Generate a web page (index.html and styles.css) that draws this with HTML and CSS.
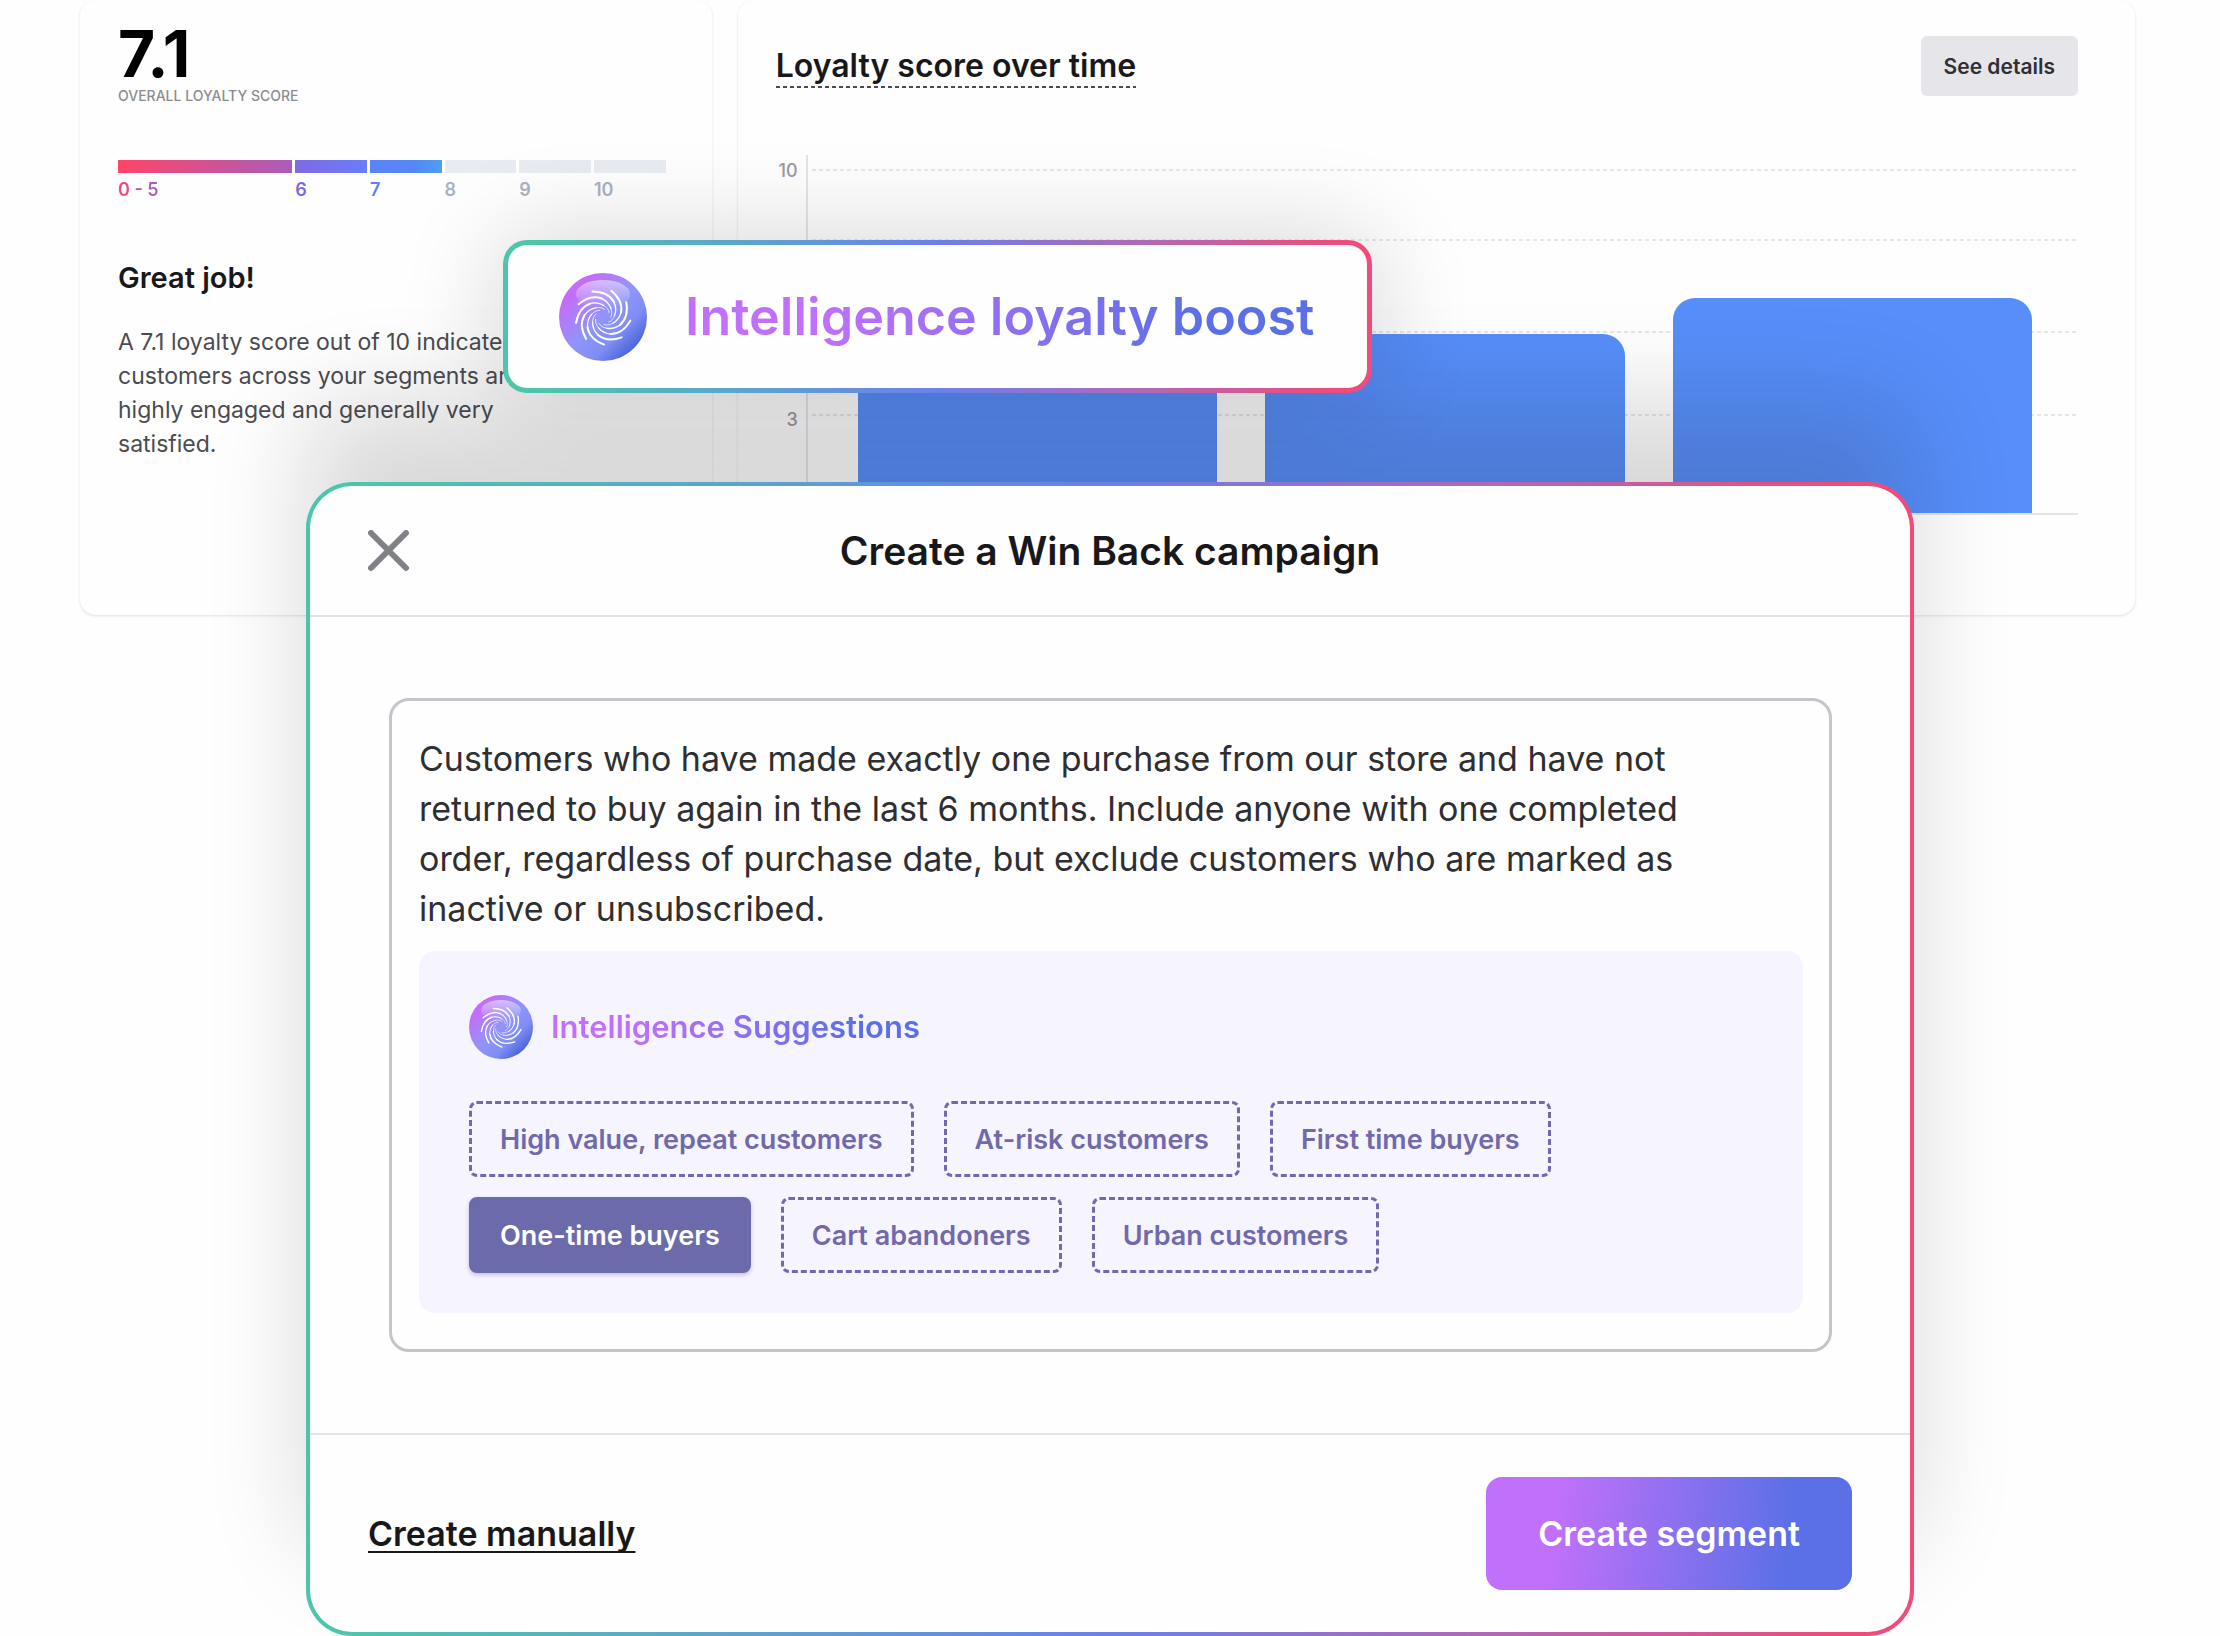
FILE: index.html
```html
<!DOCTYPE html>
<html lang="en">
<head>
<meta charset="utf-8">
<title>Create a Win Back campaign</title>
<link rel="stylesheet" href="styles.css">
</head>
<body>
<svg width="0" height="0" class="defs" aria-hidden="true">
  <defs>
    <linearGradient id="orb-fill" x1="0.1" y1="0.15" x2="0.85" y2="0.9">
      <stop offset="0.08" stop-color="#c56cf8"/>
      <stop offset="0.5" stop-color="#9095fa"/>
      <stop offset="0.75" stop-color="#7f8df5"/>
      <stop offset="1" stop-color="#4560d6"/>
    </linearGradient>
    <linearGradient id="orb-gloss" x1="0" y1="0" x2="0" y2="1">
      <stop offset="0" stop-color="#fff" stop-opacity="0.5"/>
      <stop offset="1" stop-color="#fff" stop-opacity="0"/>
    </linearGradient>
    <g id="arm" fill="none" stroke="#fff">
      <path d="M38 21 C50 21 58 25 62.500 33" stroke-width="2.2" stroke-linecap="round"/>
      <path d="M62 32 C65 38 65 44 63 49" stroke-width="1.5"/>
      <path d="M63 48.500 C62 52 59 55 56 56" stroke-width="0.8"/>
    </g>
    <symbol id="orb" viewBox="0 0 100 100">
      <circle cx="50" cy="50" r="50" fill="url(#orb-fill)"/>
      <ellipse cx="50" cy="24" rx="31" ry="16" fill="url(#orb-gloss)"/>
      <use href="#arm"/>
      <use href="#arm" transform="rotate(40 50 50)"/>
      <use href="#arm" transform="rotate(80 50 50)"/>
      <use href="#arm" transform="rotate(120 50 50)"/>
      <use href="#arm" transform="rotate(160 50 50)"/>
      <use href="#arm" transform="rotate(200 50 50)"/>
      <use href="#arm" transform="rotate(240 50 50)"/>
      <use href="#arm" transform="rotate(280 50 50)"/>
      <use href="#arm" transform="rotate(320 50 50)"/>
    </symbol>
  </defs>
</svg>
<main class="stage">
  <div class="dashboard">
    <section class="card score">
      <p class="score-value">7.1</p>
      <p class="score-label">OVERALL LOYALTY SCORE</p>
      <ol class="meter">
        <li class="step step-low"><span>0 - 5</span></li>
        <li class="step step-six"><span>6</span></li>
        <li class="step step-seven"><span>7</span></li>
        <li class="step"><span>8</span></li>
        <li class="step"><span>9</span></li>
        <li class="step"><span>10</span></li>
      </ol>
      <h2 class="score-title">Great job!</h2>
      <p class="score-text">A 7.1 loyalty score out of 10 indicates customers across your segments are highly engaged and generally very satisfied.</p>
    </section>
    <section class="card trend">
      <header class="trend-head">
        <h2 class="trend-title">Loyalty score over time</h2>
        <button class="details" type="button">See details</button>
      </header>
      <div class="chart">
        <div class="axis"><span class="tick">10</span><span class="tick">3</span></div>
        <div class="plot">
          <div class="gridlines"><i></i><i></i><i></i><i></i></div>
          <div class="bars">
            <div class="bar" style="height: 43%"></div>
            <div class="bar" style="height: 50%"></div>
            <div class="bar" style="height: 60%"></div>
          </div>
        </div>
      </div>
    </section>
  </div>

  <div class="boost">
    <svg class="boost-orb" aria-hidden="true"><use href="#orb"/></svg>
    <span class="gradient-text boost-text">Intelligence loyalty boost</span>
  </div>

  <section class="dialog" role="dialog" aria-labelledby="dialog-title">
    <header class="dialog-head">
      <button class="close" type="button" aria-label="Close">
        <svg viewBox="0 0 42 42" width="42" height="42" aria-hidden="true"><path d="M3 3 L38 38 M38 3 L3 38" fill="none" stroke="#808187" stroke-width="6" stroke-linecap="round"/></svg>
      </button>
      <h1 class="dialog-title" id="dialog-title">Create a Win Back campaign</h1>
    </header>
    <div class="dialog-body">
      <div class="prompt">
        <p class="prompt-text">Customers who have made exactly one purchase from our store and have not returned to buy again in the last 6 months. Include anyone with one completed order, regardless of purchase date, but exclude customers who are marked as inactive or unsubscribed.</p>
        <div class="suggestions">
          <h2 class="suggestions-head">
            <svg class="suggestions-orb" aria-hidden="true"><use href="#orb"/></svg>
            <span class="gradient-text">Intelligence Suggestions</span>
          </h2>
          <div class="chips">
            <button class="chip" type="button">High value, repeat customers</button>
            <button class="chip" type="button">At-risk customers</button>
            <button class="chip" type="button">First time buyers</button>
          </div>
          <div class="chips">
            <button class="chip chip-on" type="button" aria-pressed="true">One-time buyers</button>
            <button class="chip" type="button">Cart abandoners</button>
            <button class="chip" type="button">Urban customers</button>
          </div>
        </div>
      </div>
    </div>
    <footer class="dialog-foot">
      <a class="manual" href="#manual">Create manually</a>
      <button class="create" type="button">Create segment</button>
    </footer>
  </section>
</main>
</body>
</html>
```
FILE: styles.css
```css
* { box-sizing: border-box; }
body { margin: 0; background: #fefefe; color: #18181b; font-family: Inter, "Liberation Sans", sans-serif; }
h1, h2, p, ol { margin: 0; padding: 0; }
button { font: inherit; border: 0; cursor: pointer; }
.defs { position: absolute; }

/* The dashboard and the dialog share one grid cell, so the dialog covers it */
.stage { position: relative; display: grid; grid-template-columns: minmax(0, 1fr); overflow: hidden; }
.dashboard, .dialog { grid-area: 1 / 1; }
.dashboard { display: grid; grid-template-columns: 632fr 1398fr; gap: 26px; align-self: start; padding: 0 85px 0 80px; }
.card { min-height: 615px; background: #fefefe; border-radius: 16px; box-shadow: 0 1px 3px rgba(0, 0, 0, .13); }

.score { padding: 22px 46px 40px 38px; }
.score-value { font-size: 64px; line-height: 64px; font-weight: 700; color: #000; }
.score-label { font-size: 14px; line-height: 20px; font-weight: 500; color: #8c8c8f; }
.meter { display: grid; grid-template-columns: 175fr 72fr 72fr 72fr 72fr 72fr; gap: 3px; list-style: none; margin-top: 54px; font-size: 18px; line-height: 22px; font-weight: 600; color: #a9b2c3; }
.step::before { content: ""; display: block; height: 13px; margin-bottom: 6px; background: #e9ebf2; }
.step-low::before { background: linear-gradient(90deg, #ff4568, #ab5cba); }
.step-low span { color: transparent; background: linear-gradient(90deg, #fa4670, #a45fc8); background-clip: text; }
.step-six { color: #7a6be4; }
.step-six::before { background: linear-gradient(90deg, #7f6ae2, #6a7dfa); }
.step-seven { color: #5a84f8; }
.step-seven::before { background: linear-gradient(90deg, #5a84f8, #5586f7 60%, #4f9ff0); }
.score-title { margin-top: 57px; font-size: 29px; line-height: 40px; font-weight: 600; }
.score-text { margin-top: 27px; max-width: 430px; font-size: 23px; line-height: 34px; color: #4b4b50; }

.trend { padding: 36px 57px 100px 38px; }
.trend-head { display: flex; justify-content: space-between; align-items: center; }
.trend-title { padding: 2px 0; font-size: 32px; line-height: 40px; font-weight: 600; background: repeating-linear-gradient(90deg, #4b4b50 0 4px, transparent 4px 7px) bottom / 100% 2px no-repeat; }
.details { height: 60px; padding: 0 23px; border-radius: 6px; background: #e5e5ea; color: #2f2f35; font-size: 21px; font-weight: 600; }
.chart { display: grid; grid-template-columns: 32px 1fr; height: 360px; margin-top: 59px; }
.axis { display: flex; flex-direction: column; align-items: flex-end; justify-content: space-between; padding: 5px 8px 84px 0; border-right: 2px solid #e4e4e8; font-size: 18px; line-height: 22px; font-weight: 500; color: #9a9a9f; }
.plot { display: grid; padding-left: 4px; border-bottom: 2px solid #e4e4e8; }
.gridlines, .bars { grid-area: 1 / 1; }
.gridlines { display: grid; grid-template-rows: 70px 92px 83px 98px; padding-top: 14px; }
.gridlines i { background: repeating-linear-gradient(90deg, #e6e6ea 0 4px, transparent 4px 7px) top / 100% 2px no-repeat; }
.bars { display: flex; align-items: flex-end; gap: 48px; padding: 0 46px; }
.bar { flex: 1; border-radius: 22px 22px 0 0; background: #578ef9; }

.boost, .dialog { border: 4px solid transparent; background: linear-gradient(#fefefe, #fefefe) padding-box, linear-gradient(90deg, #4cc5ab 4%, #5ea0d2 30%, #6b80ea 50%, #b566b4 75%, #f04b7a 96%) border-box; }
.boost { position: absolute; z-index: 2; top: 240px; left: 503px; display: flex; align-items: center; gap: 38px; height: 153px; padding: 0 53px 0 51px; border-width: 5px; border-radius: 24px; box-shadow: 0 0 100px rgba(20, 15, 22, .18); white-space: nowrap; }
.boost-orb { width: 88px; height: 88px; }
.boost-text { font-size: 52px; line-height: 72px; }
.gradient-text { font-weight: 600; color: transparent; background: linear-gradient(90deg, #c070fa 22%, #5b70e6 82%); background-clip: text; }

.dialog { z-index: 1; width: 73%; max-width: 1608px; margin: 482px auto 0; border-radius: 46px; box-shadow: 0 -82px 100px rgba(20, 15, 22, .15); }
.dialog-head { display: grid; grid-template-columns: 42px 1fr 42px; align-items: center; height: 131px; padding: 0 58px; border-bottom: 2px solid #e5e4e8; }
.close { width: 42px; height: 42px; padding: 0; background: none; }
.dialog-title { font-size: 39px; line-height: 48px; font-weight: 600; text-align: center; }
.dialog-body { padding: 81px 78px 81px 79px; }
.prompt { padding: 33px 26px 36px 27px; border: 3px solid #c5c4cb; border-radius: 20px; }
.prompt-text { max-width: 1270px; font-size: 34px; line-height: 50px; color: #2e2e33; }
.suggestions { margin-top: 17px; padding: 44px 50px 40px; border-radius: 16px; background: #f6f4ff; }
.suggestions-head { display: flex; align-items: center; gap: 18px; margin-bottom: 42px; font-size: 31px; line-height: 44px; }
.suggestions-orb { width: 64px; height: 64px; }
.chips { display: flex; flex-wrap: wrap; gap: 20px 30px; }
.chips + .chips { margin-top: 20px; }
.chip { height: 76px; padding: 0 28px; border: 3px dashed #7169b0; border-radius: 8px; background: none; color: #7069aa; font-size: 27px; font-weight: 600; }
.chip-on { border: 3px solid #6b6aaa; background: #6b6aaa; color: #fff; box-shadow: 0 2px 4px rgba(80, 70, 140, .3); }
.dialog-foot { display: flex; justify-content: space-between; align-items: center; height: 199px; padding: 0 58px; border-top: 2px solid #e5e4e8; }
.manual { color: #18181b; font-size: 34px; line-height: 44px; font-weight: 600; text-decoration-thickness: 2px; text-underline-offset: 5px; text-decoration-skip-ink: none; }
.create { height: 113px; padding: 0 52px; border-radius: 16px; background: linear-gradient(97deg, #c070fa 20%, #5b70e6 82%); color: #fff; font-size: 34px; font-weight: 600; }
```
